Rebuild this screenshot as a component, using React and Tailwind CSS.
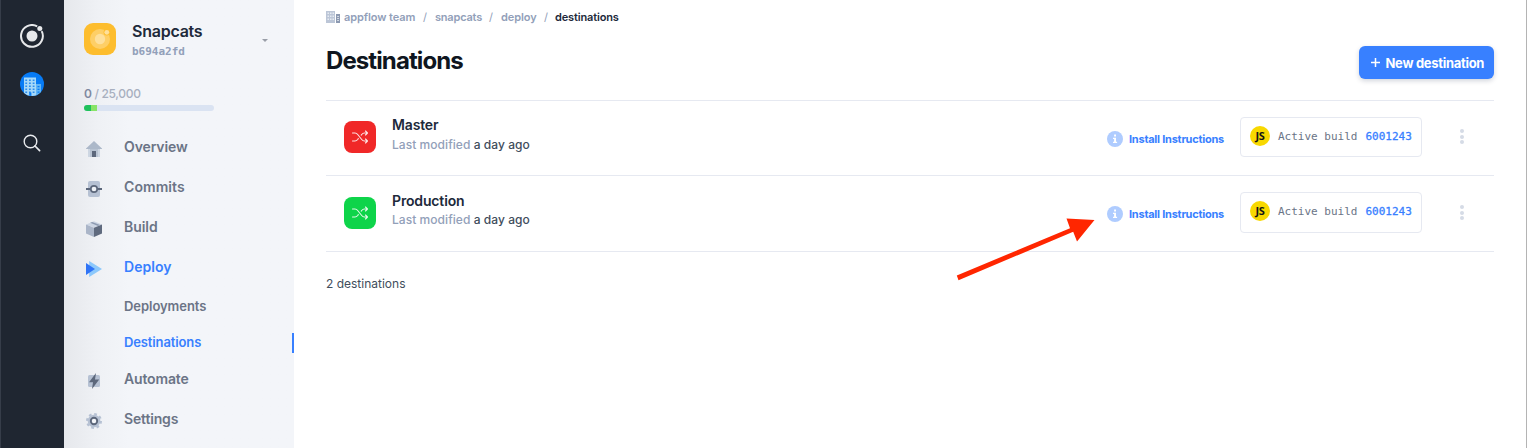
import React from "react";

function IonicLogo({ className, ring, dot }) {
  return (
    <svg viewBox="0 0 24 24" className={className} fill="none">
      <path d="M17.2 2.4A10.900 10.900 0 1 0 21.7 7.100" stroke={ring} strokeWidth="2" />
      <circle cx="12" cy="12" r="5.500" fill={dot} />
      <circle cx="19.800" cy="4.500" r="2.500" fill={dot} />
    </svg>
  );
}

function AppIcon() {
  return (
    <svg viewBox="0 0 32 32" className="h-8 w-8 shrink-0">
      <rect width="32" height="32" rx="9" fill="#fdbd2e" />
      <circle cx="16" cy="16" r="10" fill="#fecf66" />
      <circle cx="22.8" cy="9.3" r="3.2" fill="#fdbd2e" />
      <circle cx="22.8" cy="9.3" r="2.4" fill="#fee09b" />
      <circle cx="16" cy="16" r="5.2" fill="#fee09b" />
    </svg>
  );
}

function TeamAvatar() {
  const rows = [7.5, 10.5, 13.5, 16.5, 19.5];
  return (
    <svg viewBox="0 0 24 24" className="h-6 w-6">
      <defs>
        <clipPath id="avatar">
          <circle cx="12" cy="12" r="12" />
        </clipPath>
      </defs>
      <g clipPath="url(#avatar)">
        <rect width="24" height="24" fill="#077bf5" />
        <path d="M4 5.500h12v18.500H4z" fill="#a5d8f8" />
        <path d="M16 12h5v12h-5z" fill="#5fb4f6" />
        {rows.map((y) => (
          <g key={y} fill="#2b8cf0">
            <rect x="5.3" y={y} width="1.8" height="1.5" />
            <rect x="9" y={y} width="1.8" height="1.5" />
            <rect x="12.7" y={y} width="1.8" height="1.5" />
          </g>
        ))}
        <path d="M17.5 14h2v1.3h-2zM17.5 16.8h2v1.3h-2zM17.5 19.5h2v1.3h-2zM9.2 20.5h2.2V24H9.2z" fill="#077bf5" />
      </g>
    </svg>
  );
}

function HomeIcon() {
  return (
    <svg viewBox="0 0 16 16" className="h-4 w-4">
      <path d="M2 7h12v9H2z" fill="#cdd6e2" />
      <path d="M4 7h8v9H4z" fill="#b8c3d2" />
      <path d="M8 0l8 7.600V8H0v-.4z" fill="#acb8c9" />
      <path d="M6 10h4v6H6z" fill="#5c677b" />
    </svg>
  );
}

function CommitIcon() {
  return (
    <svg viewBox="0 0 16 16" className="h-4 w-4" fill="none">
      <rect x="2" width="12" height="16" rx="2" fill="#b6c1d3" />
      <path d="M0 8h4.500M11.500 8H16" stroke="#5c677b" strokeWidth="1.800" />
      <circle cx="8" cy="8" r="3.200" fill="#eef1f6" stroke="#5c677b" strokeWidth="1.700" />
    </svg>
  );
}

function BuildIcon() {
  return (
    <svg viewBox="0 0 16 16" className="h-4 w-4">
      <path d="M8 .2l8 3.200-8 3.200-8-3.200z" fill="#cdd6e4" />
      <path d="M0 3.500l8 3.200V16l-8-3.600z" fill="#aab5c8" />
      <path d="M16 3.500L8 6.700V16l8-3.600z" fill="#5f6a7e" />
      <path d="M4.200 1.700l2-.8L14 4l-2 .9z" fill="#8e9bb1" />
    </svg>
  );
}

function DeployIcon() {
  return (
    <svg viewBox="0 0 16 16" className="h-4 w-4">
      <path d="M3.200 0v16L16 8z" fill="#8cc8fb" />
      <path d="M0 2v12l9-6z" fill="#2f74f6" />
    </svg>
  );
}

function AutomateIcon() {
  return (
    <svg viewBox="0 0 16 16" className="h-4 w-4">
      <rect x="2" y="2" width="12" height="12" rx="1.500" fill="#b6c1d3" />
      <path d="M10 0L3 9.200h4L6 16l7.200-9.400H9z" fill="#5c677b" />
    </svg>
  );
}

function SettingsIcon() {
  return (
    <svg viewBox="0 0 16 16" className="h-4 w-4" fill="none">
      <circle cx="8" cy="8" r="6.300" fill="#b6c1d3" />
      <circle cx="8" cy="8" r="6.900" stroke="#b6c1d3" strokeWidth="2.200" strokeDasharray="2.710 2.710" />
      <circle cx="8" cy="8" r="3.200" fill="#f3f5f9" stroke="#5c677b" strokeWidth="1.900" />
    </svg>
  );
}

function BuildingIcon() {
  return (
    <svg viewBox="0 0 14 12" className="h-3 w-3.5">
      <path d="M0 0h9v12H0z" fill="#bcc6d7" />
      <path d="M10 3h4v9h-4z" fill="#8c99b1" />
      <path d="M1.500 1.500h1.500v1.500H1.500zM4 1.500h1.500v1.500H4zM6.500 1.500H8v1.500H6.500zM1.500 4.500h1.500V6H1.500zM4 4.500h1.500V6H4zM6.500 4.500H8V6H6.500zM1.500 7.500h1.500V9H1.500zM4 7.500h1.500V9H4zM6.500 7.500H8V9H6.500zM11.300 5h1.500v1h-1.500zM11.300 7h1.500v1h-1.500zM11.300 9h1.500v1h-1.500z" fill="#e6ebf2" />
    </svg>
  );
}

function ShuffleIcon() {
  return (
    <svg viewBox="0 0 16 14" className="h-3.5 w-4" fill="none" stroke="#fff" strokeWidth="1.100" strokeLinecap="round" strokeLinejoin="round" opacity=".88">
      <path d="M.500 3H3c1.200 0 1.900.500 2.700 1.500l4 5c.800 1 1.500 1.500 2.700 1.500h3M.500 11H3c1.200 0 1.900-.500 2.700-1.500l.6-.8M9.200 5.100l.5-.6C10.500 3.500 11.200 3 12.400 3h3M13.500 1l2 2-2 2M13.500 9l2 2-2 2" />
    </svg>
  );
}

function NavItem({ icon, label, active, tracking }) {
  return (
    <div className="flex h-10 items-center pl-[22px]">
      <span className="w-[38px] pt-1">{icon}</span>
      <span className={`text-[14px] leading-5 font-semibold ${tracking} ${active ? "text-[#3880ff]" : "text-[#6b7486]"}`}>{label}</span>
    </div>
  );
}

function Destination({ name, color, height, boxHeight, pad }) {
  return (
    <div className={`flex items-start border-b border-[#e6e9f1] pl-[18px] ${height}`}>
      <div className={`flex h-8 w-8 shrink-0 items-center justify-center rounded-lg ${color} ${pad.icon}`}>
        <ShuffleIcon />
      </div>
      <div className={`ml-4 flex-1 ${pad.text}`}>
        <div className="text-[14px] leading-5 font-semibold tracking-[-0.150px] text-[#20293a]">{name}</div>
        <div className={`text-[12px] leading-[18px] font-medium tracking-[0.050px] text-[#414d5c] ${pad.sub}`}>
          <span className="text-[#92a0b9]">Last modified</span> a day ago
        </div>
      </div>
      <div className={`mr-4 flex items-center gap-1.5 ${pad.link}`}>
        <svg viewBox="0 0 16 16" className="h-4 w-4">
          <circle cx="8" cy="8" r="8" fill="#afccff" />
          <path d="M7.100 3.600h1.900v1.900H7.100zM6 6.700h3v4h1.100v1.300H6v-1.300h1.100V8H6z" fill="#fff" />
        </svg>
        <span className="w-[95px] text-[11px] leading-4 font-bold tracking-[-0.240px] whitespace-nowrap text-[#3880ff]">Install Instructions</span>
      </div>
      <div className={`flex w-[182px] shrink-0 items-start rounded border border-[#e6e9f1] pt-2 pl-[9px] ${boxHeight} ${pad.box}`}>
        <div className="flex h-5 w-5 items-center justify-center rounded-full bg-[#f8d800] font-['Open_Sans',sans-serif] text-[11px] leading-5 font-bold tracking-[-0.300px] text-[#151515]">JS</div>
        <div className="ml-2 pt-px font-['DejaVu_Sans_Mono',monospace] text-[11px] leading-5 whitespace-pre text-[#6b7486]">Active build</div>
        <div className="ml-2 pt-px font-['DejaVu_Sans_Mono',monospace] text-[11px] leading-5 text-[#3880ff] [-webkit-text-stroke:0.300px_#3880ff]">6001243</div>
      </div>
      <div className={`mr-[30px] ml-[38px] flex flex-col gap-[1.500px] ${pad.dots}`}>
        <i className="h-1 w-1 rounded-full bg-[#d5dbe6]" />
        <i className="h-1 w-1 rounded-full bg-[#d5dbe6]" />
        <i className="h-1 w-1 rounded-full bg-[#d5dbe6]" />
      </div>
    </div>
  );
}

export default function App() {
  return (
    <div className="relative flex h-[448px] w-[1527px] overflow-hidden bg-white font-['Inter',sans-serif]">
      <aside className="flex w-16 shrink-0 flex-col items-center border-l border-[#363d49] bg-[#1f2631] pt-6 pr-px">
        <IonicLogo className="h-6 w-6" ring="#e6e8ea" dot="#e6e8ea" />
        <div className="mt-6">
          <TeamAvatar />
        </div>
        <svg viewBox="0 0 18 18" className="mt-[38px] h-[18px] w-[18px]" fill="none" stroke="#e9ebee" strokeLinecap="round">
          <circle cx="7.500" cy="7.500" r="6.300" strokeWidth="1.400" />
          <path d="M12 12l4.600 4.600" strokeWidth="1.700" />
        </svg>
      </aside>

      <nav className="w-[230px] shrink-0 bg-[#f3f5f9] bg-linear-to-r from-[#e6e8ec] via-[#eff1f5] via-15% to-[#f3f5f9] to-28%">
        <div className="flex h-[85px] items-start pt-[23px] pl-5">
          <AppIcon />
          <div className="ml-4 w-[130px]">
            <div className="-mt-0.5 text-[16px] leading-5 font-semibold tracking-[-0.240px] text-[#20293a]">Snapcats</div>
            <div className="mt-0.5 font-['DejaVu_Sans_Mono',monospace] text-[11px] leading-[18px] font-bold text-[#92a0b9]">b694a2fd</div>
          </div>
          <svg viewBox="0 0 6 3" className="mt-4 h-[3px] w-1.5">
            <path d="M0 0h6L3 3z" fill="#999ea8" />
          </svg>
        </div>
        <div className="h-[42px] pl-5">
          <div className="text-[12px] leading-[18px] font-medium tracking-[-0.320px] text-[#a7afbf]">
            <span className="font-semibold text-[#8089a0]">0</span> / 25,000
          </div>
          <div className="mt-0.5 flex h-1.5 w-[130px] overflow-hidden rounded-full bg-[#dae3f2]">
            <div className="w-[7px] bg-[#1fc15c]" />
            <div className="w-1.5 bg-[#88e468]" />
          </div>
        </div>
        <NavItem icon={<HomeIcon />} label="Overview" tracking="tracking-[-0.100px]" />
        <NavItem icon={<CommitIcon />} label="Commits" tracking="tracking-[0.080px]" />
        <NavItem icon={<BuildIcon />} label="Build" tracking="tracking-[-0.050px]" />
        <NavItem icon={<DeployIcon />} label="Deploy" tracking="tracking-[0.060px]" active />
        <div className="flex h-9 items-center pt-0.5 pl-[60px] text-[13px] leading-5 font-semibold tracking-[-0.050px] text-[#6b7486]">Deployments</div>
        <div className="flex h-9 items-center justify-between pl-[60px] text-[13px] leading-5 font-semibold tracking-[-0.120px] text-[#3880ff]">
          <span className="pt-0.5">Destinations</span>
          <span className="mt-[3px] h-5 w-0.5 bg-[#3880ff]" />
        </div>
        <NavItem icon={<AutomateIcon />} label="Automate" tracking="tracking-[-0.160px]" />
        <NavItem icon={<SettingsIcon />} label="Settings" tracking="tracking-[-0.160px]" />
      </nav>

      <main className="flex-1 border-r border-[#b4b4b4] pr-8 pl-8">
        <div className="flex h-[34px] items-center text-[11px] leading-4 font-semibold tracking-[-0.080px] text-[#92a0b9]">
          <BuildingIcon />
          <span className="ml-1 w-[79px]">appflow team</span>
          <span className="w-3 font-normal">/</span>
          <span className="w-[54px] tracking-[-0.200px]">snapcats</span>
          <span className="w-3 font-normal">/</span>
          <span className="w-[43px]">deploy</span>
          <span className="w-[11px] font-normal">/</span>
          <span className="tracking-[-0.150px] text-[#20293a]">destinations</span>
        </div>
        <header className="flex h-[67px] items-start justify-between border-b border-[#e6e9f1]">
          <h1 className="mt-[11px] text-[24px] leading-8 font-bold tracking-[-0.900px] text-[#0f1620]">Destinations</h1>
          <button className="mt-3 flex h-[33px] w-[135px] items-center rounded-md bg-[#3880ff] pl-3 text-white shadow-[0_2px_5px_rgba(0,20,60,0.18)]">
            <svg viewBox="0 0 9 9" className="mr-[5.500px] h-[9px] w-[9px]" stroke="#fff" strokeWidth="1.500">
              <path d="M4.500 0v9M0 4.500h9" />
            </svg>
            <span className="text-[13px] leading-5 font-bold tracking-[-0.300px] whitespace-nowrap">New destination</span>
          </button>
        </header>
        <Destination
          name="Master"
          color="bg-[#f02828]"
          height="h-[75px]"
          boxHeight="h-10"
          pad={{ icon: "mt-5", text: "mt-3.5", sub: "mt-px", link: "mt-[30px]", box: "mt-4", dots: "mt-7" }}
        />
        <Destination
          name="Production"
          color="bg-[#0ed44a]"
          height="h-[76px]"
          boxHeight="h-[41px]"
          pad={{ icon: "mt-[21px]", text: "mt-[15px]", sub: "mt-0", link: "mt-[30px]", box: "mt-4", dots: "mt-[29px]" }}
        />
        <p className="mt-[22px] text-[12px] leading-5 text-[#414d5c]">2 destinations</p>
      </main>

      <svg viewBox="0 0 144 70" className="absolute top-[214px] left-[954px] h-[70px] w-36">
        <path d="M2.800 61.500L116 14.200 112.500 4.500 140.500 6 123 27.500 119.200 17.800 4.500 66.200z" fill="#ff2600" />
      </svg>
    </div>
  );
}
